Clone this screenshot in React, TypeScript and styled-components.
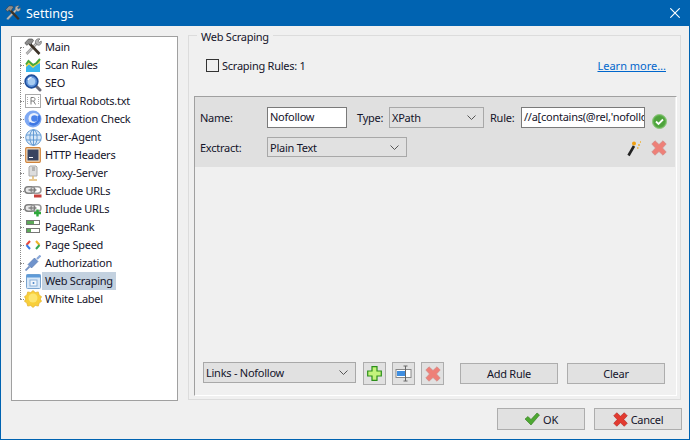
import React from 'react';
import styled, { createGlobalStyle } from 'styled-components';

const Global = createGlobalStyle`
  html, body { margin: 0; padding: 0; background: #f0f0f0; }
  * { box-sizing: border-box; }
`;

const Window = styled.div`
  width: 690px; height: 440px; display: flex; flex-direction: column;
  background: #f0f0f0; border: 1px solid #0063b1; border-top: 0;
  font: 11px "Noto Sans", sans-serif; letter-spacing: -0.25px; color: #14142a; overflow: hidden;
`;
const TitleBar = styled.div`
  height: 26px; flex: none; background: #0063b1; color: #fff; display: flex; align-items: center; letter-spacing: 0;
  margin: 0 -1px; padding: 0 10px 0 5px; gap: 5px; font: 12.5px "Noto Sans", sans-serif;
`;
const TitleText = styled.span`flex: 1;`;
const Body = styled.div`flex: 1; min-height: 0; display: flex; padding: 9px 8px 0 10px; gap: 10px;`;
const Tree = styled.div`
  width: 167px; height: 365px; margin-top: 1px; background: #fff; border: 1px solid #a0a0a0;
  padding: 1px 0 0 12px; position: relative;
`;
const TreeLine = styled.div`
  position: absolute; left: 8px; top: 10px; height: 252px; border-left: 1px dotted #8a8a8a;
`;
const TreeRow = styled.div`height: 18px; display: flex; align-items: center; position: relative;
  &::before { content: ""; width: 4px; border-top: 1px dotted #8a8a8a; margin-left: -4px; flex: none; }
`;
const IconSlot = styled.span`width: 18px; height: 18px; flex: none; display: flex; align-items: center; justify-content: center;`;
const TreeLabel = styled.span<{ $selected?: boolean }>`
  height: 18px; line-height: 18px; padding: 0 3px; background: ${p => (p.$selected ? '#c3d1df' : 'transparent')};
`;
const Group = styled.div`
  flex: 1; height: 365px; border: 1px solid #dcdcdc; position: relative; padding: 0 3px 3px 5px; display: flex; flex-direction: column;
`;
const Legend = styled.span`
  position: absolute; left: 8px; top: -6px; background: #f0f0f0; padding: 0 4px; line-height: 14px;
`;
const ScrapeRow = styled.div`height: 60px; flex: none; display: flex; align-items: center; padding: 0 11px 1px 12px;`;
const Check = styled.span`width: 13px; height: 13px; border: 1px solid #333; margin-right: 3px; flex: none;`;
const Spacer = styled.span`flex: 1;`;
const LearnMore = styled.a`color: #0066cc; text-decoration: underline; letter-spacing: 0;`;
const Panel = styled.div`
  flex: 1; display: flex; flex-direction: column; border: 1px solid; border-color: #a0a0a0 #fff #fff #a0a0a0;
`;
const RuleHead = styled.div`background: #e0e0e0; height: 70px; padding: 10px 0 0 5px; margin-right: 1px; display: flex; flex-direction: column; gap: 9px;`;
const RuleRow = styled.div<{ $h: number }>`display: flex; align-items: center; height: ${p => p.$h}px;`;
const Label = styled.span<{ $w: number; $ml?: number }>`width: ${p => p.$w}px; margin-left: ${p => p.$ml ?? 0}px; flex: none;`;
const StatusIcon = styled.span`width: 15px; height: 15px; margin: 8px 0 0 7px; flex: none; display: flex;`;
const RowIcon = styled.span<{ $ml?: number; $mr?: number }>`
  margin: 2px ${p => p.$mr ?? 0}px 0 ${p => p.$ml ?? 0}px; flex: none; display: flex;
`;
const Field = styled.div<{ $w: number }>`
  width: ${p => p.$w}px; height: 21px; background: #fff; border: 1px solid #7a7a7a; padding: 0 2px; line-height: 18px;
  overflow: hidden; white-space: nowrap; flex: none;
`;
const Combo = styled.div<{ $w: number; $h?: number }>`
  width: ${p => p.$w}px; height: ${p => p.$h ?? 21}px; background: #e1e1e1; border: 1px solid #a8a8a8; padding: 0 7px 0 2px;
  display: flex; align-items: center; justify-content: space-between; flex: none;
`;
const BottomRow = styled.div`margin-top: auto; padding: 0 0 10px 8px; display: flex; align-items: flex-start;`;
const IconButton = styled.div<{ $ml: number }>`
  width: 23px; height: 23px; background: #e1e1e1; border: 1px solid #adadad; margin-left: ${p => p.$ml}px;
  display: flex; align-items: center; justify-content: center; flex: none;
`;
const Button = styled.div<{ $ml?: number; $w?: number }>`
  width: ${p => p.$w ?? 98}px; height: 21px; margin: 1px 0 0 ${p => p.$ml ?? 0}px; background: #e1e1e1; border: 1px solid #adadad;
  display: flex; align-items: center; justify-content: center; gap: 3px; flex: none;
`;
const Footer = styled.div`height: 38px; flex: none; display: flex; justify-content: flex-end; gap: 9px; padding: 7px 7px 0 0;`;
const FooterButton = styled(Button)`width: 88px; height: 22px; margin: 0;`;

const Chevron = () => (
  <svg width="9" height="5" viewBox="0 0 9 5" fill="none"><path d="M.5.5 4.500 4.500 8.500.5" stroke="#555" /></svg>
);
const Tools = ({ s = 18 }: { s?: number }) => (
  <svg width={s} height={s} viewBox="0 0 18 18" fill="none">
    <path d="M2.500 16 13 5" stroke="#9c9c9c" strokeWidth="2.600" />
    <path d="M2.500 16 13 5" stroke="#d8d8d8" strokeWidth=".8" />
    <path d="M12.500 1.500c1-.8 2.500-1 3.500-.5l-2 2 1 1.500 2.200-1.500c.5 1.500 0 3-1.200 3.800-1 .7-2 .5-2.800 0L11.500 5c-.3-1.300 0-2.700 1-3.500z" fill="#b4b4b4" stroke="#5c5c5c" strokeWidth=".6" />
    <path d="M5.500 5.500 15.500 16" stroke="#3c3228" strokeWidth="2.600" />
    <path d="M.8 5 4.500 1h3.800l1.200 1.500L6.500 7 5 5.500 2.700 7.300z" fill="#8c8c8c" stroke="#3c3c3c" strokeWidth=".6" />
  </svg>
);
const ScanIcon = () => (
  <svg width="16" height="15" viewBox="0 0 16 15">
    <path d="M1 6.500 3.500 3 8 7 11.500 5 15 1v13H1z" fill="#f2d94a" />
    <path d="M1 9l3-2.500 4 3.500 3.500-3L15 5v9H1z" fill="#38b6ec" />
    <path d="M1 6.500 3.500 3 8 7 11.500 5 15 1" fill="none" stroke="#46a83a" strokeWidth="2" />
  </svg>
);
const SeoIcon = () => (
  <svg width="18" height="18" viewBox="0 0 18 18">
    <path d="M11.500 11.500l4.500 4.500" stroke="#6a6a78" strokeWidth="3" strokeLinecap="round" />
    <circle cx="7.500" cy="7.500" r="6.300" fill="#5f94dc" stroke="#1f4f9c" strokeWidth="1.700" />
    <circle cx="7.500" cy="7.500" r="3.800" fill="#a8ccf2" />
    <path d="M4 6c.6-1.600 2-2.500 3.500-2.500" stroke="#fff" strokeWidth="1.200" fill="none" />
  </svg>
);
const RobotsIcon = () => (
  <svg width="16" height="14" viewBox="0 0 16 14">
    <rect x=".5" y=".5" width="15" height="13" fill="#fff" stroke="#aaa" />
    <path d="M2.500 3v8M13.500 3v8" stroke="#aaa" strokeDasharray="1 1" />
    <path d="M6 3.500h2.500c2 0 2 3.500 0 3.500H6m0-3.500v7m2.500-3.500 2 3.500" stroke="#7a7a7a" fill="none" />
  </svg>
);
const IndexIcon = () => (
  <svg width="18" height="18" viewBox="0 0 18 18">
    <circle cx="9" cy="9" r="8.500" fill="#7ea8f2" />
    <circle cx="10" cy="8.500" r="5.500" fill="#eaf1fd" />
    <circle cx="10.500" cy="8.500" r="3.300" fill="#4a82ea" />
    <path d="M14.500 5.500a6 6 0 0 1-9 7.500" fill="none" stroke="#3f78e4" strokeWidth="2.600" />
  </svg>
);
const GlobeIcon = () => (
  <svg width="17" height="17" viewBox="0 0 17 17" fill="none" stroke="#5a94d0" strokeWidth=".9">
    <circle cx="8.500" cy="8.500" r="7.800" fill="#d6e7f8" />
    <ellipse cx="8.500" cy="8.500" rx="3.600" ry="7.800" />
    <path d="M1 6h15M1 11h15M8.500 1v15" />
  </svg>
);
const HttpIcon = () => (
  <svg width="16" height="16" viewBox="0 0 16 16">
    <rect x=".7" y=".7" width="14.600" height="14.600" rx="1" fill="#f2dcc0" stroke="#d0843c" strokeWidth="1.200" />
    <rect x="2.500" y="2.500" width="11" height="11" fill="#3a4460" />
    <rect x="4" y="10" width="4" height="1" fill="#fff" />
  </svg>
);
const ProxyIcon = () => (
  <svg width="12" height="17" viewBox="0 0 12 17">
    <path d="M3 1h6l1 1v9H2V2z" fill="#ddd" stroke="#aaa" />
    <path d="M5 3h3M5 5h3" stroke="#888" />
    <path d="M6 11v3M2 15h8" stroke="#e0b870" strokeWidth="1.500" />
  </svg>
);
const Chain = () => (
  <>
    <rect x=".8" y="3.800" width="10" height="6.400" rx="3.200" fill="#e8e8e8" stroke="#808080" strokeWidth="1.500" />
    <rect x="7" y="3.800" width="10" height="6.400" rx="3.200" fill="none" stroke="#9a9a9a" strokeWidth="1.500" />
    <path d="M4.500 7h8" stroke="#777" strokeWidth="1.300" />
  </>
);
const ExcludeIcon = () => (
  <svg width="18" height="16" viewBox="0 0 18 16"><Chain /><rect x="10" y="11.500" width="7.500" height="3" fill="#c8403c" /></svg>
);
const IncludeIcon = () => (
  <svg width="18" height="16" viewBox="0 0 18 16"><Chain /><path d="M13.500 8.500v7M10 12h7" stroke="#2ea83a" strokeWidth="2.400" /></svg>
);
const RankIcon = () => (
  <svg width="14" height="14" viewBox="0 0 14 14">
    <rect x=".5" y=".5" width="13" height="4" fill="#fff" stroke="#777" />
    <rect x="1" y="1" width="7" height="3" fill="#5da85a" />
    <rect x=".5" y="8.500" width="13" height="4" fill="#fff" stroke="#777" />
    <rect x="1" y="9" width="4" height="3" fill="#5da85a" />
  </svg>
);
const SpeedIcon = () => (
  <svg width="16" height="12" viewBox="0 0 16 12" fill="none" strokeWidth="2">
    <path d="M5 2 1.500 6" stroke="#e8483c" /><path d="M1.500 6 5 10" stroke="#3b7de8" />
    <path d="M11 2l3.500 4" stroke="#f0b428" /><path d="M14.500 6 11 10" stroke="#35a853" />
  </svg>
);
const AuthIcon = () => (
  <svg width="16" height="16" viewBox="0 0 16 16">
    <path d="M.5 15.500 4.500 11.500" stroke="#7894c4" strokeWidth="1.800" />
    <path d="M3 9.500 9.500 3l3.500 3.500L6.500 13z" fill="#6f93cc" stroke="#4d6ea8" strokeWidth=".6" />
    <path d="M12 4 15.500.5" stroke="#8aa8d8" strokeWidth="2.200" />
  </svg>
);
const ScrapeIcon = () => (
  <svg width="17" height="15" viewBox="0 0 17 15">
    <rect x="1.500" y=".5" width="14" height="14" rx="1" fill="#d8e8f8" stroke="#7aa4cf" />
    <rect x="1.500" y=".5" width="14" height="3" fill="#5d9ad8" />
    <rect x="5" y="6" width="7" height="6" fill="#f2f7fc" stroke="#8ab0d8" />
    <circle cx="8.500" cy="9" r="1" fill="#4d86c8" />
  </svg>
);
const SunIcon = () => (
  <svg width="18" height="18" viewBox="0 0 18 18">
    <path d="M9 .5l2.300 2 3-.6.800 3 2.500 1.800-1.400 2.300 1.400 2.300-2.500 1.800-.8 3-3-.6L9 17.500l-2.300-2-3 .6-.8-3L.4 11.300 1.800 9 .4 6.700l2.500-1.800.8-3 3 .6z" fill="#f8cf3a" stroke="#e0a820" strokeWidth=".6" />
    <circle cx="9" cy="8" r="4.500" fill="#fde56f" />
  </svg>
);
const RedX = ({ s = 16, faded }: { s?: number; faded?: boolean }) => (
  <svg width={s} height={s} viewBox="0 0 16 16">
    <path d="M4 .8 8 4.500 12 .8 15.200 4 11.500 8 15.200 12 12 15.200 8 11.500 4 15.200 .8 12 4.500 8 .8 4z"
      fill={faded ? '#ee8078' : '#e23a30'} stroke={faded ? '#cf8a86' : '#b52a24'} strokeWidth=".7" />
  </svg>
);
const GreenPlus = () => (
  <svg width="15" height="15" viewBox="0 0 15 15">
    <path d="M5 .7h5v4.300h4.300v5H10v4.300H5V10H.7V5H5z" fill="#c4f47c" stroke="#2c8f1a" strokeWidth="1.200" />
  </svg>
);
const Rename = () => (
  <svg width="17" height="17" viewBox="0 0 17 17" fill="none">
    <rect x="1" y="4.500" width="15" height="8" fill="#fff" stroke="#888" />
    <rect x="2" y="6" width="8" height="5" fill="#3f8ee0" />
    <path d="M10.500 1v15M8.500 1h4M8.500 16h4" stroke="#666" />
  </svg>
);
const OkDot = () => (
  <svg width="15" height="15" viewBox="0 0 15 15" fill="none">
    <circle cx="7.500" cy="7.500" r="7" fill="#5db04a" stroke="#8cc47c" />
    <circle cx="7.500" cy="7.500" r="5.500" fill="#4ea33c" />
    <path d="M4 7.500l2.500 2.500 4.500-4.500" stroke="#fff" strokeWidth="1.800" />
  </svg>
);
const Wand = () => (
  <svg width="16" height="17" viewBox="0 0 16 17" fill="none">
    <path d="M1.500 15.500 7 6" stroke="#222" strokeWidth="2.600" />
    <circle cx="7" cy="3.500" r="2" fill="#f0a010" />
    <path d="M11 5h2M10 8h1.500M13 2h1" stroke="#f0b030" strokeWidth="1.500" />
  </svg>
);
const GreenCheck = () => (
  <svg width="16" height="14" viewBox="0 0 16 14">
    <path d="M1 7l3-2.500 3 3L13 1l2.500 2L7 13z" fill="#4ea832" stroke="#327a20" strokeWidth=".6" />
  </svg>
);
const CloseX = () => (
  <svg width="10" height="10" viewBox="0 0 10 10" fill="none"><path d="M.3.3l9.400 9.400M9.700.3.300 9.700" stroke="#fff" strokeWidth="1.100" /></svg>
);

const items: [string, React.ReactNode][] = [
  ['Main', <Tools key="a" />], ['Scan Rules', <ScanIcon key="b" />], ['SEO', <SeoIcon key="c" />],
  ['Virtual Robots.txt', <RobotsIcon key="d" />], ['Indexation Check', <IndexIcon key="e" />], ['User-Agent', <GlobeIcon key="f" />],
  ['HTTP Headers', <HttpIcon key="g" />], ['Proxy-Server', <ProxyIcon key="h" />], ['Exclude URLs', <ExcludeIcon key="i" />],
  ['Include URLs', <IncludeIcon key="j" />], ['PageRank', <RankIcon key="k" />], ['Page Speed', <SpeedIcon key="l" />],
  ['Authorization', <AuthIcon key="m" />], ['Web Scraping', <ScrapeIcon key="n" />], ['White Label', <SunIcon key="o" />],
];

export default function App() {
  return (
    <Window>
      <Global />
      <TitleBar><Tools s={16} /><TitleText>Settings</TitleText><CloseX /></TitleBar>
      <Body>
        <Tree>
          <TreeLine />
          {items.map(([name, icon]) => (
            <TreeRow key={name}>
              <IconSlot>{icon}</IconSlot>
              <TreeLabel $selected={name === 'Web Scraping'}>{name}</TreeLabel>
            </TreeRow>
          ))}
        </Tree>
        <Group>
          <Legend>Web Scraping</Legend>
          <ScrapeRow>
            <Check />
            <span>Scraping Rules: 1</span>
            <Spacer />
            <LearnMore>Learn more…</LearnMore>
          </ScrapeRow>
          <Panel>
            <RuleHead>
              <RuleRow $h={21}>
                <Label $w={67}>Name:</Label>
                <Field $w={80}>Nofollow</Field>
                <Label $w={32} $ml={10}>Type:</Label>
                <Combo $w={95}>XPath<Chevron /></Combo>
                <Label $w={31} $ml={6}>Rule:</Label>
                <Field $w={124}>{"//a[contains(@rel,'nofollo"}</Field>
                <StatusIcon><OkDot /></StatusIcon>
              </RuleRow>
              <RuleRow $h={20}>
                <Label $w={67}>Exctract:</Label>
                <Combo $w={140} $h={20}>Plain Text<Chevron /></Combo>
                <Spacer />
                <RowIcon><Wand /></RowIcon>
                <RowIcon $ml={8} $mr={8}><RedX faded /></RowIcon>
              </RuleRow>
            </RuleHead>
            <BottomRow>
              <Combo $w={153}>Links - Nofollow<Chevron /></Combo>
              <IconButton $ml={7}><GreenPlus /></IconButton>
              <IconButton $ml={6}><Rename /></IconButton>
              <IconButton $ml={6}><RedX faded /></IconButton>
              <Button $ml={16}>Add Rule</Button>
              <Button $ml={9}>Clear</Button>
            </BottomRow>
          </Panel>
        </Group>
      </Body>
      <Footer>
        <FooterButton><GreenCheck />OK</FooterButton>
        <FooterButton><RedX s={15} />Cancel</FooterButton>
      </Footer>
    </Window>
  );
}
